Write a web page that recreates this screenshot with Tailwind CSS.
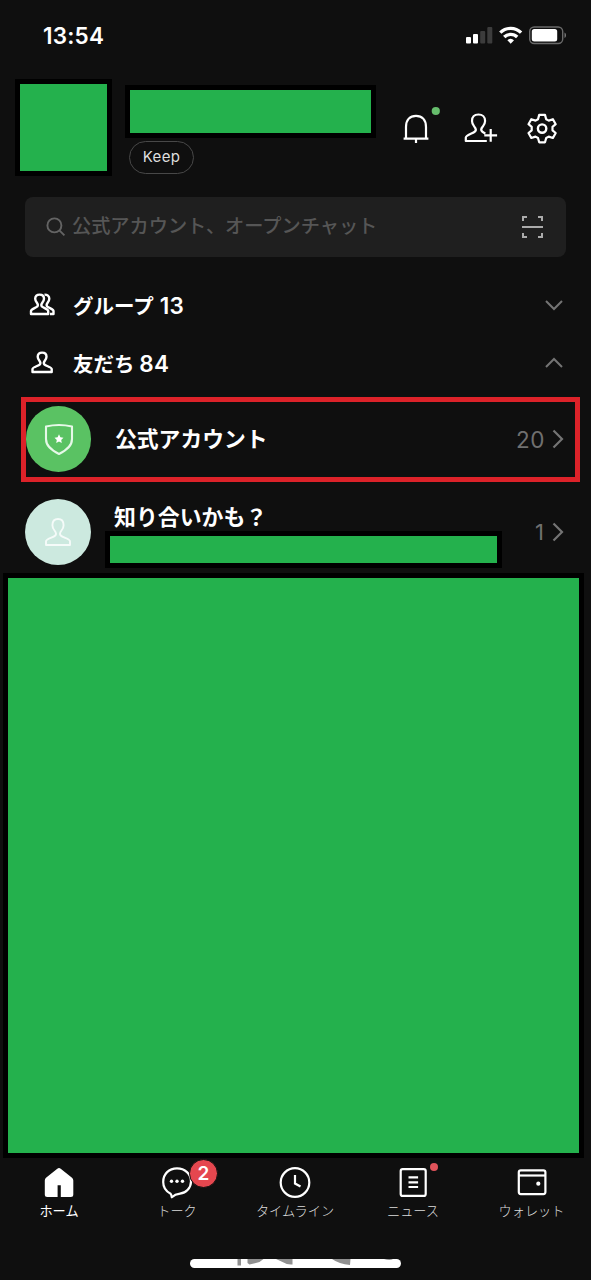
<!DOCTYPE html>
<html lang="ja">
<head>
<meta charset="utf-8">
<title>Home</title>
<script src="https://cdn.jsdelivr.net/npm/@tailwindcss/browser@4"></script>
</head>
<body class="bg-[#0f0f0f]">
<div class="flex h-[1280px] w-[591px] flex-col overflow-hidden bg-[#0f0f0f] font-['Inter','Noto_Sans_CJK_JP',sans-serif] text-white">

  <!-- Status bar -->
  <div class="flex h-[79px] shrink-0 items-start justify-between pl-[43px] pr-[24px]">
    <div class="mt-[21px] text-[22.5px] leading-[30px] font-semibold tracking-[0.2px]">13:54</div>
    <div class="mt-[26px] flex">
      <svg width="102" height="19" viewBox="0 0 102 19" fill="none">
        <rect x="1" y="11" width="5" height="6.500" rx="1" fill="#fff"/>
        <rect x="8" y="8" width="5" height="9.500" rx="1" fill="#fff"/>
        <rect x="15.200" y="5" width="5" height="12.500" rx="1" fill="#3c3c3c"/>
        <rect x="22.300" y="1" width="5" height="16.500" rx="1" fill="#3c3c3c"/>
        <g stroke="#fff" stroke-width="3.300">
          <path d="M35.300 6.700a14.700 14.700 0 0 1 20.800 0"/>
          <path d="M39.200 11a9.200 9.200 0 0 1 13 0"/>
        </g>
        <path d="M42.400 14.200a4.800 4.800 0 0 1 6.600 0l-3.300 3.500z" fill="#fff"/>
        <rect x="64.700" y="1" width="33" height="16.500" rx="4.500" stroke="#6a6a6a" stroke-width="1.400"/>
        <rect x="66.800" y="3" width="25.400" height="12.600" rx="2.500" fill="#fff"/>
        <path d="M99.500 6.500c2 .8 2 4.700 0 5.500z" fill="#777"/>
      </svg>
    </div>
  </div>

  <!-- Profile header -->
  <div class="flex h-[118px] shrink-0 items-start pl-[15px]">
    <div class="size-[97px] shrink-0 border-5 border-black bg-[#24b14d]"></div>
    <div class="ml-[13px] mt-[6px] w-[251px] shrink-0">
      <div class="h-[53px] border-5 border-black bg-[#24b14d]"></div>
      <div class="ml-1 mt-[3px] flex h-[33px] w-[65px] items-center justify-center rounded-full border-[1.5px] border-[#484848] pb-px text-[15px] tracking-[0.35px] text-[#dedede]">Keep</div>
    </div>
    <svg class="ml-[19px] mt-[21px]" width="170" height="50" viewBox="395 100 170 50" fill="none" stroke="#fff" stroke-width="2.200">
      <path d="M403.600 138.700h24.800M406 138.700V127c0-7 4-11.100 10-11.100s10 4.100 10 11.100v11.700M416 139v4"/>
      <circle cx="435.800" cy="111" r="4.100" fill="#66bd6c" stroke="none"/>
      <path d="M486.800 141h-21v-3.400c0-2.600 7-4 9.300-6.200 1.200-1.100.7-3-.8-4.800-1.700-2-2.300-3.600-2.300-5.600 0-4 2.500-6.500 6.500-6.500s6.600 2.500 6.600 6.500c0 2-.7 3.600-2.300 5.600-1.600 1.800-2 3.700-.8 4.800 1 .9 2 1.500 3.400 2.100M484.300 135.400h12.800M490.700 129v12.800" stroke-linejoin="round"/>
      <path d="M539.200 114.900h5.800l1.200 4.300 2.500 1.400 4.200-1.400 2.800 5-3.200 2.700v3.400l3.200 2.700-2.800 5-4.200-1.400-2.500 1.400-1.200 4.300h-5.800l-1.200-4.300-2.500-1.400-4.200 1.400-2.800-5 3.200-2.700v-3.400l-3.200-2.700 2.800-5 4.200 1.400 2.500-1.400z" stroke-linejoin="round"/>
      <circle cx="542.100" cy="128.600" r="4.200" stroke-width="2.400"/>
    </svg>
  </div>

  <!-- Search -->
  <div class="ml-[25px] flex h-[60px] w-[541px] shrink-0 items-center rounded-lg bg-[#1f1f1f] pl-[21px] pr-[22px]">
    <svg width="20" height="20" viewBox="0 0 20 20" fill="none" stroke="#646464" stroke-width="1.900"><circle cx="8.400" cy="8.400" r="7"/><path d="m13.400 13.400 5 5"/></svg>
    <span class="-mt-px ml-[6px] whitespace-nowrap text-[19.2px] font-medium text-[#565656]">公式アカウント、オープンチャット</span>
    <svg class="ml-auto" width="23" height="24" viewBox="0 0 23 24" fill="none" stroke="#ababab" stroke-width="2"><path d="M2 6V2h4M17 2h4v4M21 18v4h-4M6 22H2v-4M1 12h21"/></svg>
  </div>

  <!-- Groups -->
  <div class="mt-[19px] flex h-[58px] shrink-0 items-center pl-[29px] pr-[28px]">
    <svg class="w-[27px]" height="24" viewBox="0 0 27 24" fill="none" stroke="#fff" stroke-width="2.400" stroke-linejoin="round"><path d="M2 21v-3c0-1.800 4.700-3 6.400-4.600.8-.9.500-2.200-.5-3.600C6.700 8.200 6.200 7 6.200 5.800c0-2.600 1.700-4.200 4.400-4.200S15 3.200 15 5.800c0 1.200-.5 2.400-1.700 4-1 1.400-1.300 2.700-.5 3.600C14.500 15 19.200 16.200 19.200 18v3z"/><path d="M15.500 1.600c2.800-.1 4.800 1.400 4.800 4.200 0 1.200-.5 2.400-1.700 4-1 1.400-1.300 2.700-.5 3.600 1.700 1.600 6.400 2.800 6.400 4.600v3H21"/></svg>
    <div class="mt-px ml-[17px] whitespace-nowrap text-[20.5px] font-bold">グループ <span class="ml-px text-[22.5px] font-semibold tracking-[0.3px]">13</span></div>
    <svg class="ml-auto" width="18" height="12" viewBox="0 0 18 12" fill="none" stroke="#747474" stroke-width="2"><path d="m1 2 8 8 8-8"/></svg>
  </div>

  <!-- Friends -->
  <div class="flex h-[58px] shrink-0 items-center pl-[29px] pr-[28px]">
    <svg class="w-[27px]" height="24" viewBox="0 0 27 24" fill="none" stroke="#fff" stroke-width="2.400" stroke-linejoin="round"><path transform="translate(2.500 0)" d="M1 21v-3c0-1.800 5.700-3 7.400-4.600.8-.9.500-2.200-.5-3.600C6.700 8.200 6.200 7 6.200 5.800c0-2.600 1.700-4.200 4.400-4.200S15 3.200 15 5.800c0 1.200-.5 2.400-1.700 4-1 1.400-1.300 2.700-.5 3.600C14.500 15 20.200 16.200 20.200 18v3z"/></svg>
    <div class="mt-px ml-[17px] whitespace-nowrap text-[20.500px] font-bold">友だち <span class="text-[22.5px] font-semibold tracking-[0.3px]">84</span></div>
    <svg class="ml-auto" width="18" height="12" viewBox="0 0 18 12" fill="none" stroke="#747474" stroke-width="2"><path d="m1 10 8-8 8 8"/></svg>
  </div>

  <!-- Official accounts -->
  <div class="ml-[21px] mt-[5px] flex h-[85px] w-[559px] shrink-0 items-center border-5 border-[#dc2229] pr-[11px]">
    <div class="-mt-px flex h-[66px] w-[65px] items-center justify-center rounded-full bg-[#5ac263]">
      <svg width="30" height="34" viewBox="0 0 30 34" fill="none"><path d="M2 4.500Q15 1.500 28 4.500V17c0 7-5 11-13 15C7 28 2 24 2 17z" stroke="#e6f8e8" stroke-width="2.100" stroke-linejoin="round"/><path d="m15 12.300 1.400 3 3.100.4-2.300 2.200.6 3.200-2.800-1.600-2.800 1.600.6-3.200-2.300-2.200 3.100-.4z" fill="#fff"/></svg>
    </div>
    <div class="ml-[24px] whitespace-nowrap text-[21.800px] font-bold">公式アカウント</div>
    <div class="ml-auto text-[22.5px] tracking-[0.5px] text-[#707070]">20</div>
    <svg class="-mt-px ml-[7px]" width="12" height="20" viewBox="0 0 12 20" fill="none" stroke="#747474" stroke-width="2.200"><path d="m1.500 1.500 8.500 8.500-8.500 8.500"/></svg>
  </div>

  <!-- Suggested friends -->
  <div class="flex h-[91px] shrink-0 items-start pl-[25px] pr-[27px]">
    <div class="mt-[17px] flex size-[66px] items-center justify-center rounded-full bg-[#cce9df]">
      <svg class="-mt-px" width="28" height="30" viewBox="0 0 28 30" fill="none" stroke="#fff" stroke-opacity="0.8" stroke-width="1.900" stroke-linejoin="round"><path d="M2 28v-3.500c0-3 7-3.500 9.300-6 1.200-1.300.8-3-.8-5-1.600-2-2.100-3.400-2.100-5.200C8.400 4.300 10.500 2 14 2s5.600 2.300 5.600 6.300c0 1.800-.5 3.200-2.100 5.200-1.600 2-2 3.700-.8 5 2.300 2.500 9.300 3 9.300 6V28z"/></svg>
    </div>
    <div class="ml-[14px] mt-[17px] flex w-[397px] flex-col">
      <div class="h-[32px] whitespace-nowrap pl-[9px] text-[21.900px] leading-[37px] font-bold">知り合いかも？</div>
      <div class="h-[37px] border-5 border-black bg-[#24b14d]"></div>
    </div>
    <div class="ml-auto mt-[33px] flex items-center text-[22px] leading-[34px] text-[#707070]">1<svg class="ml-[8px]" width="12" height="20" viewBox="0 0 12 20" fill="none" stroke="#747474" stroke-width="2.200"><path d="m1.500 1.500 8.500 8.500-8.500 8.500"/></svg></div>
  </div>

  <div class="ml-[3px] h-[585px] w-[581px] shrink-0 border-5 border-black bg-[#24b14d]"></div>

  <!-- Tab bar -->
  <div class="flex h-[101px] shrink-0 text-[13.200px] leading-[18px] font-light text-[#dcdcdc]">
    <div class="flex w-[118px] flex-col items-center pt-[8px]">
      <svg width="32" height="34" viewBox="0 0 32 34"><path fill="#fff" d="M14.300 2.700Q16 1.300 17.700 2.700L29 11.700Q30.300 13 30.300 14.500V28.500Q30.300 31 27.800 31H17.800V19.200H14.600V31H4.300Q1.800 31 1.800 28.500V14.500Q1.800 13 3 11.700z"/></svg>
      <span class="mt-[2px] font-normal text-white">ホーム</span>
    </div>
    <div class="relative flex w-[118px] flex-col items-center pt-[8px]">
      <svg width="34" height="34" viewBox="0 0 34 34" fill="none" stroke="#fff" stroke-width="2.200" stroke-linejoin="round"><path d="M11.800 31.300c-.2-1.300-.4-2.800-1.200-3.600C5.500 25 3.200 20.800 3.200 15.900 3.200 8 9 2.300 17 2.300S31 8 31 15.500c0 6.500-5 11.400-11 12.200-4 .5-5.700 1.300-8.200 3.600z"/><g fill="#fff" stroke="none"><circle cx="11.500" cy="15.300" r="1.700"/><circle cx="17" cy="15.300" r="1.700"/><circle cx="22.500" cy="15.300" r="1.700"/></g></svg>
      <span class="mt-[2px]">トーク</span>
      <div class="absolute left-[71px] top-[1px] flex size-[29px] items-center justify-center rounded-full border border-[#0f0f0f] bg-[#e5474f] text-[19px] font-semibold text-white">2</div>
    </div>
    <div class="flex w-[118px] flex-col items-center pt-[8px]">
      <svg width="34" height="34" viewBox="0 0 34 34" fill="none" stroke="#fff" stroke-width="2.200"><circle cx="17" cy="16.500" r="14.300"/><path d="M17 9v8.500l5.500 3"/></svg>
      <span class="mt-[2px] whitespace-nowrap">タイムライン</span>
    </div>
    <div class="relative flex w-[118px] flex-col items-center pt-[8px]">
      <svg width="34" height="34" viewBox="0 0 34 34" fill="none" stroke="#fff" stroke-width="2.200"><rect x="4.700" y="3.100" width="25" height="26.800" rx="2"/><path d="M12.500 11.400h9.600M12.500 16.300h9.600M12.500 21h9.600"/></svg>
      <span class="mt-[2px]">ニュース</span>
      <div class="absolute left-[76px] top-[5px] size-2 rounded-full bg-[#e0535a]"></div>
    </div>
    <div class="flex w-[118px] flex-col items-center pt-[8px]">
      <svg width="34" height="34" viewBox="0 0 34 34" fill="none" stroke="#fff" stroke-width="2.200"><rect x="4.800" y="4.300" width="26.600" height="23.800" rx="2"/><path d="M4.500 9.500h27"/><circle cx="24.300" cy="17.700" r="2.100" fill="#fff" stroke="none"/></svg>
      <span class="mt-[2px] ml-px whitespace-nowrap">ウォレット</span>
    </div>
  </div>

  <!-- Home indicator -->
  <svg class="ml-[190px] shrink-0" width="211" height="9" viewBox="0 0 211 9"><rect width="211" height="9" rx="4.500" fill="#fff"/><path d="M47.500 0h3.500v6.500h-3.500zM57.500 0h16l-4 3-10 2.500-2-1.500zM86 0h16.500v5.500q-5 .5-10-2.500zM142 0h18.500l-.5 6q-11-1-18-6zM194 0h9q-3 2-9 0z" fill="#909090"/></svg>
</div>
</body>
</html>
